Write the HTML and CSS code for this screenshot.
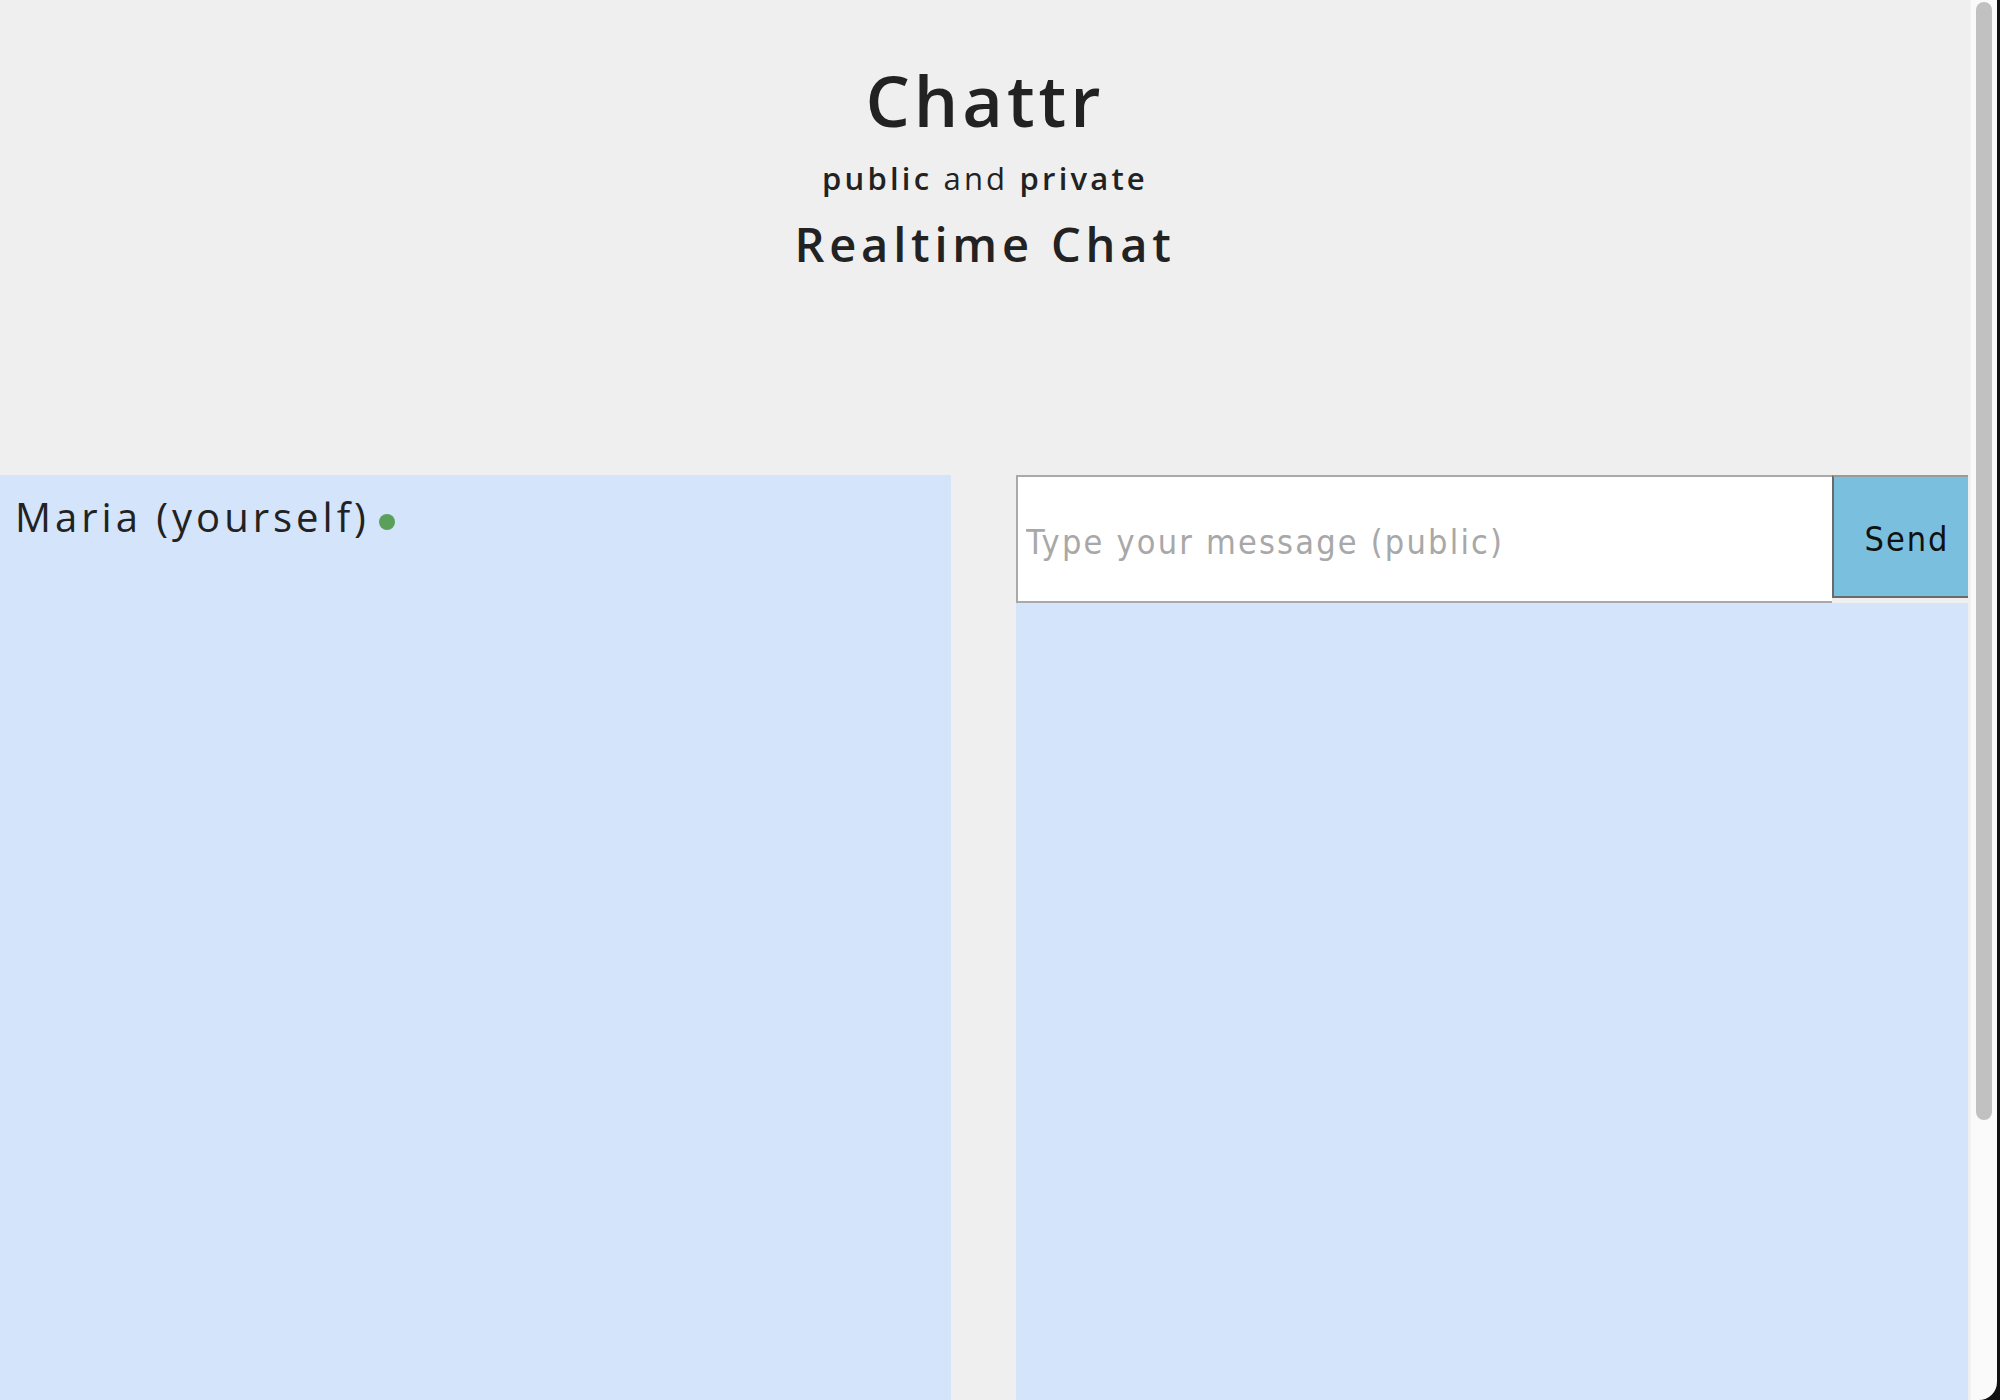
FILE: index.html
```html
<!DOCTYPE html>
<html lang="en">
<head>
<meta charset="utf-8">
<title>Chattr - Realtime Chat</title>
<link rel="stylesheet" href="styles.css">
</head>
<body>
  <div class="page">
    <header class="masthead">
      <h1 class="brand">Chattr</h1>
      <p class="tagline"><b>public</b> and <b>private</b></p>
      <h2 class="subtitle">Realtime Chat</h2>
    </header>
    <main class="chat">
      <section class="users">
        <div class="user">
          <span class="user-name">Maria (yourself)</span>
          <span class="status-dot"></span>
        </div>
      </section>
      <section class="conversation">
        <form class="composer">
          <input class="composer-input" type="text" placeholder="Type your message (public)">
          <button class="composer-send" type="button">Send</button>
        </form>
        <div class="messages"></div>
      </section>
    </main>
  </div>
  <div class="scrollbar"><div class="scrollbar-thumb"></div></div>
</body>
</html>
```

FILE: styles.css
```css
body {
  margin: 0;
  background: #efefef;
  color: #222;
  font-family: "Open Sans", "Noto Sans", sans-serif;
}
.page {
  width: 1970px;
}
.masthead {
  text-align: center;
  padding-top: 60px;
  height: 475px;
  box-sizing: border-box;
}
.brand {
  margin: 0;
  font-size: 70px;
  font-weight: 600;
  line-height: 80px;
  letter-spacing: 4px;
}
.tagline {
  margin: 0;
  font-size: 31px;
  font-weight: 400;
  line-height: 60px;
  padding-top: 8px;
  letter-spacing: 3.2px;
}
.tagline b {
  font-weight: 600;
}
.subtitle {
  margin: 0;
  font-size: 47px;
  font-weight: 600;
  line-height: 72px;
  letter-spacing: 4.8px;
}
.chat {
  display: grid;
  grid-template-columns: 951px 952px;
  column-gap: 65px;
  height: 1278px;
}
.users {
  background: #d4e4fa;
  padding: 12px 15px;
}
.user {
  display: flex;
  align-items: center;
  gap: 9px;
}
.user-name {
  font-size: 40px;
  letter-spacing: 4px;
  line-height: 60px;
}
.status-dot {
  width: 16px;
  height: 16px;
  border-radius: 50%;
  background: #5aa05a;
  margin-top: 10px;
}
.conversation {
  display: flex;
  flex-direction: column;
}
.composer {
  display: flex;
  align-items: flex-start;
  margin: 0;
}
.composer-input {
  flex: 1;
  height: 128px;
  box-sizing: border-box;
  border: 2px solid #a9a9a9;
  border-right: none;
  background: #fff;
  padding: 6px 8px 0;
  font-family: "DejaVu Sans Condensed", "DejaVu Sans", sans-serif;
  font-size: 34px;
  letter-spacing: 2.2px;
  color: #222;
  outline: none;
}
.composer-input::placeholder {
  color: #a8a8a8;
}
.composer-send {
  width: 136px;
  height: 123px;
  box-sizing: border-box;
  background: #7bbfdf;
  border: 2px solid #6a6a6a;
  border-top-color: #9a9a9a;
  border-right: none;
  font-family: "DejaVu Sans Condensed", "DejaVu Sans", sans-serif;
  font-size: 34px;
  letter-spacing: 2px;
  color: #111;
  padding: 4px 0 0 12px;
}
.messages {
  flex: 1;
  background: #d4e4fa;
}
.scrollbar {
  position: fixed;
  top: 0;
  right: 0;
  width: 30px;
  height: 100vh;
  background: #111;
}
.scrollbar::before {
  content: "";
  position: absolute;
  left: 0;
  top: 0;
  width: 27px;
  height: 100%;
  background: #fafafa;
  border-left: 1px solid #f3f3f3;
  box-sizing: border-box;
  border-bottom-right-radius: 18px;
}
.scrollbar-thumb {
  position: absolute;
  left: 6px;
  top: 2px;
  width: 16px;
  height: 1118px;
  border-radius: 8px;
  background: #c1c1c1;
}
```
